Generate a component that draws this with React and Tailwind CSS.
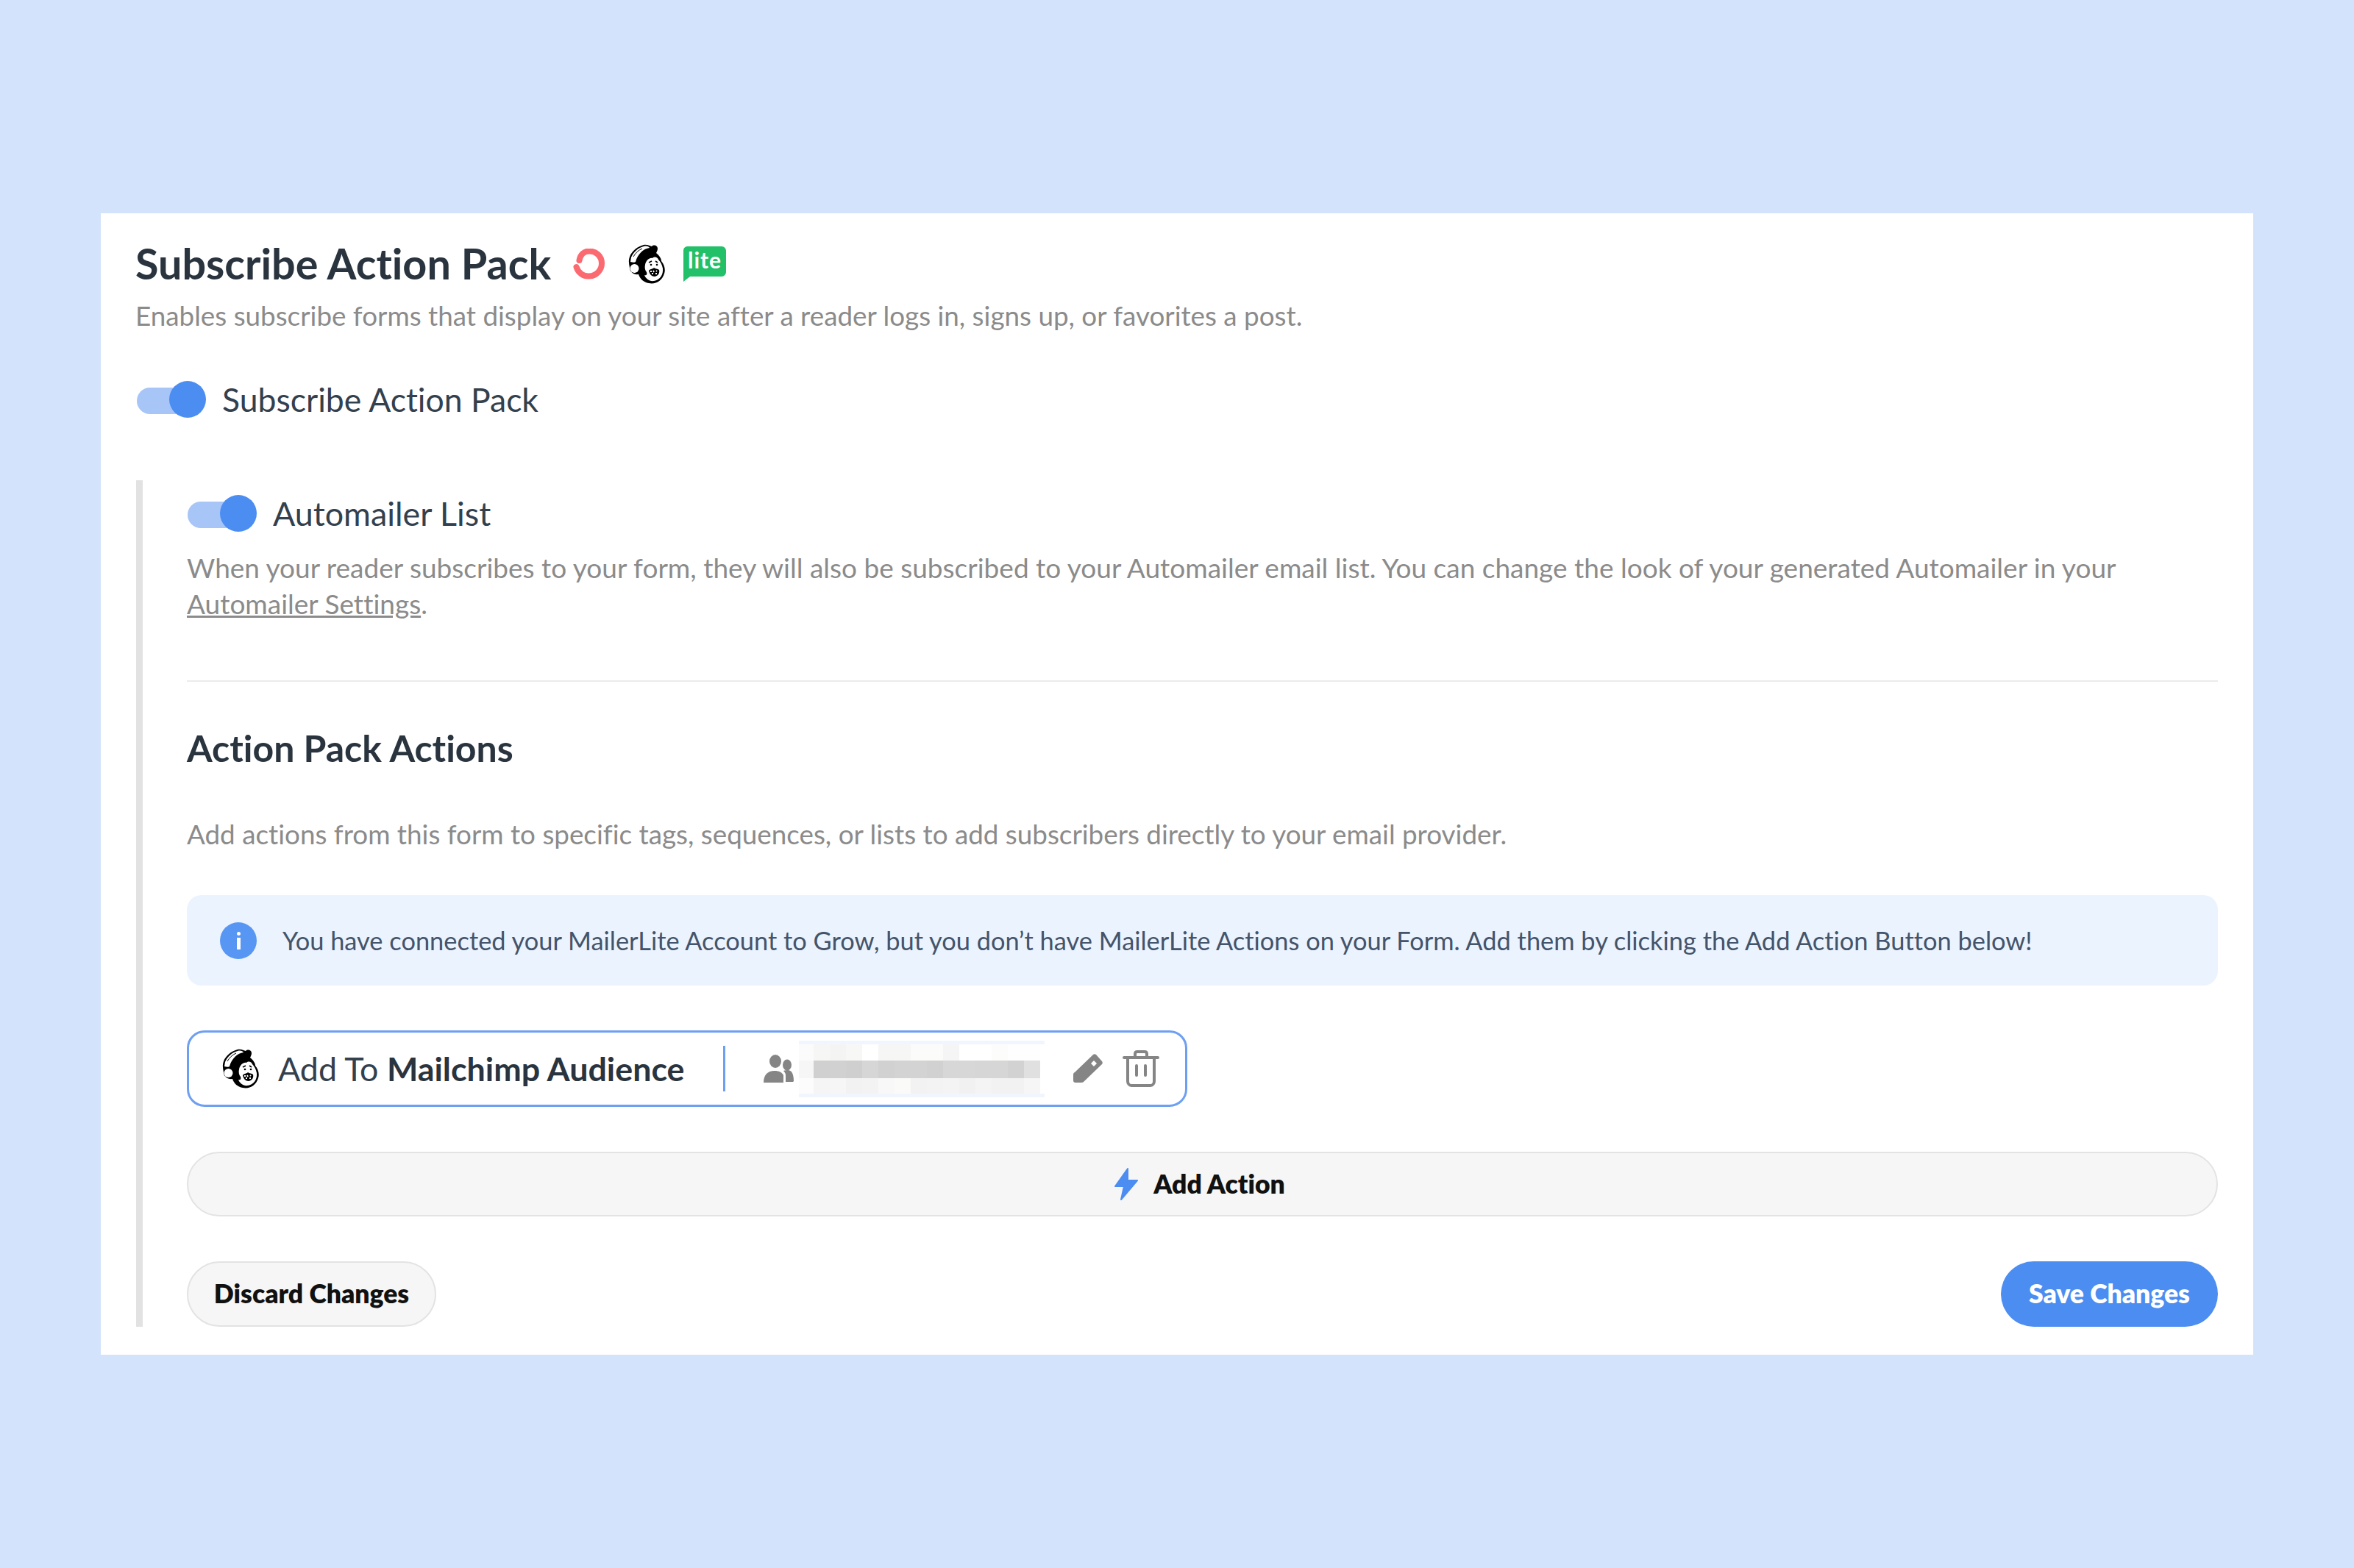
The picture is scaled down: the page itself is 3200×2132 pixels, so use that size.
import React from "react";

function Mailchimp({ className }) {
  return (
    <svg viewBox="0 0 52 54" className={className}>
      <path d="M22 1C27 0 31 3 33 3 36 0 41 2 41 6 41 8 40 10 39 12 44 16 46 20 46 23 50 28 52 34 50 40 47 50 38 55 29 53 22 52 17 47 15 41 9 42 3 38 3 32 2 27 1 22 3 17 6 9 14 3 22 1z" fill="#000" />
      <path d="M5 18C8 11 14 5 22 3 26 2 29 3 30 5 22 6 14 13 11 24 10 25 7 25 4 24z" fill="#fff" />
      <path d="M8 17C11 12 15 8 20 6" stroke="#000" strokeWidth="1" fill="none" />
      <circle cx="9.500" cy="33" r="6" fill="#fff" />
      <path d="M24 28C25 22 30 18 34 19 37 16 41 18 42 21 45 24 47 28 48 33 49 41 44 49 36 50 30 51 25 47 23 42 26 43 27 41 26 38 24 36 23 32 24 28z" fill="#fff" />
      <path d="M29 25l4-2M38 23l3 2" stroke="#000" strokeWidth="1.600" fill="none" />
      <circle cx="32" cy="28" r="1.300" fill="#000" />
      <circle cx="40" cy="28" r="1.300" fill="#000" />
      <path d="M29 36C31 33 35 34 36 32 38 34 41 33 43 35 44 39 42 43 37 44 33 44 30 41 29 36z" fill="#000" />
      <path d="M31 37h2M35 36l1 2M39 36l1 1M33 40h2M38 40h2" stroke="#fff" strokeWidth="1.800" />
    </svg>
  );
}

function Toggle({ className }) {
  return (
    <span className={`relative block h-[50px] w-[94px] shrink-0 ${className}`}>
      <span className="absolute left-0 right-[10px] top-[9px] h-[36px] rounded-full bg-[#a7c5f7]" />
      <span className="absolute right-0 top-0 h-[50px] w-[50px] rounded-full bg-[#4c8df1]" />
    </span>
  );
}

const topRow = ["#fbfbfb","#f6f6f5","#f4f4f3","#f7f7f6","#ffffff","#f6f6f5","#f6f6f5","#fbfbfa","#fbfbfa","#f5f5f5","#ffffff","#ffffff","#fcfcfb","#fefefe","#fefefe"];
const midRow = ["#f6f6f6","#d0d0d0","#d1d1d1","#cfcfcf","#d6d6d6","#d1d1d1","#d3d3d3","#d3d3d3","#d1d1d1","#d7d7d7","#d7d7d7","#d6d6d6","#d6d6d6","#d2d2d2","#e0e0e0"];
const botRow = ["#fcfcfc","#f5f5f5","#f6f6f6","#f2f2f2","#f3f3f3","#f8f8f8","#fafaf8","#f2f2f2","#f3f3f3","#f4f4f4","#f1f1f1","#f4f4f4","#f2f2f2","#f2f2f2","#f6f6f6"];

function Redacted() {
  return (
    <div className="ml-[7px] flex h-[77px] w-[334px] flex-col border-y-[5px] border-[#f1f6fe]">
      {[[topRow, "h-[22px]"], [midRow, "h-[24px]"], [botRow, "h-[21px]"]].map(([row, h], i) => (
        <div key={i} className={`flex ${h}`}>
          {row.map((c, j) => (
            <div key={j} className={j === 0 ? "w-[20px]" : "w-[22px]"} style={{ backgroundColor: c }} />
          ))}
        </div>
      ))}
    </div>
  );
}

export default function App() {
  return (
    <div className="h-[2132px] w-[3200px] bg-[#d3e3fc] px-[137px] pt-[290px] font-['Lato','Noto_Sans',sans-serif] [font-variant-ligatures:none]">
      <div className="h-[1552px] w-[2926px] bg-white pl-[47px] pr-[48px] pt-[34px]">
        <div className="flex h-[68px] items-center">
          <h1 className="text-[57.500px] font-bold leading-[68px] text-[#29343f]">Subscribe Action Pack</h1>
          <svg viewBox="0 0 44 42" className="ml-[29px] mt-[2px] h-[42px] w-[44px]">
            <path d="M5.500 25C8 33 15 38 23 37.500 33 37 40 29 40 20 40 10 32 3.500 23 3.500 16 3.500 11 8 9.500 16" fill="none" stroke="#fb6a70" strokeWidth="8" strokeLinecap="round" />
          </svg>
          <Mailchimp className="ml-[31px] mt-[2px] h-[54px] w-[52px]" />
          <svg viewBox="0 0 59 48" className="ml-[23px] mt-[2px] h-[48px] w-[59px]">
            <path d="M6 0h47a6 6 0 0 1 6 6v29a6 6 0 0 1-6 6H10L1 48V6a6 6 0 0 1 5-6z" fill="#22c069" />
            <text x="30" y="30" textAnchor="middle" fontFamily="Lato" fontWeight="700" fontSize="30" letterSpacing="1" fill="#fff">lite</text>
          </svg>
        </div>
        <p className="mt-[13px] text-[36.800px] leading-[48px] text-[#8b8b8b]">Enables subscribe forms that display on your site after a reader logs in, signs up, or favorites a post.</p>
        <div className="mt-[65px] flex items-center gap-[22px]">
          <Toggle className="ml-[2px]" />
          <span className="text-[44.500px] leading-[50px] text-[#33404d]">Subscribe Action Pack</span>
        </div>
        <div className="ml-[1px] mt-[85px] flex h-[1151px] flex-col border-l-[9px] border-[#e2e2e2] pl-[60px] pt-[20px]">
          <div className="flex items-center gap-[22px]">
            <Toggle className="ml-[1px]" />
            <span className="text-[44.800px] leading-[50px] text-[#33404d]">Automailer List</span>
          </div>
          <p className="mt-[24px] text-[37px] leading-[49px] text-[#8b8b8b]">
            When your reader subscribes to your form, they will also be subscribed to your Automailer email list. You can change the look of your generated Automailer in your{" "}
            <span className="underline">Automailer Settings</span>.
          </p>
          <div className="mt-[80px] h-[2px] bg-[#ebebeb]" />
          <h2 className="mt-[58px] text-[50px] font-bold leading-[64px] text-[#29343f]">Action Pack Actions</h2>
          <p className="mt-[61px] text-[36.800px] leading-[48px] text-[#8b8b8b]">Add actions from this form to specific tags, sequences, or lists to add subscribers directly to your email provider.</p>
          <div className="mt-[59px] flex h-[123px] items-center gap-[35px] rounded-[20px] bg-[#ebf3fe] pl-[45px]">
            <span className="flex h-[50px] w-[50px] flex-col items-center justify-center gap-[3px] rounded-full bg-[#5896f3]">
              <span className="h-[5px] w-[5px] rounded-full bg-white" />
              <span className="h-[16px] w-[5px] bg-white" />
            </span>
            <span className="text-[34.400px] leading-[46px] text-[#44546a]">You have connected your MailerLite Account to Grow, but you don’t have MailerLite Actions on your Form. Add them by clicking the Add Action Button below!</span>
          </div>
          <div className="mt-[61px] flex h-[104px] w-[1360px] items-center rounded-[24px] border-[3px] border-[#6ea0f2] pl-[44px]">
            <Mailchimp className="h-[54px] w-[52px]" />
            <span className="ml-[25px] text-[44.800px] leading-[56px] text-[#33404d]">
              Add To <span className="font-bold text-[#29343f]">Mailchimp Audience</span>
            </span>
            <span className="ml-[52px] h-[62px] w-[3px] bg-[#6ea0f2]" />
            <svg viewBox="0 0 41 38" className="ml-[52px] h-[38px] w-[41px]" fill="#858585">
              <ellipse cx="16" cy="9" rx="8" ry="9" />
              <ellipse cx="32" cy="14" rx="6" ry="7.500" />
              <path d="M0 38c0-10 5-16 15-16 6 0 10 2 12 6v10z" />
              <path d="M27 22c2-1 4-1 6-1 5 0 8 5 8 15l-1 1H30v-9c0-2-1-4-3-6z" />
            </svg>
            <Redacted />
            <svg viewBox="0 0 41 40" className="ml-[39px] h-[40px] w-[41px]" fill="#858585">
              <path fillRule="evenodd" d="M27 1c1-1 3-1 4 0l8 9c1 1 1 3 0 4L15 37c-1 1-2 2-4 2H3c-2 0-3-1-3-3v-7c0-2 0-3 2-4zM28 9l-4 4 4 4 4-4z" />
            </svg>
            <svg viewBox="0 0 50 50" className="ml-[26px] h-[50px] w-[50px]" fill="none" stroke="#858585" strokeWidth="4" strokeLinecap="round">
              <path d="M2 10h46M17 9V5c0-2 1-3 3-3h10c2 0 3 1 3 3v4M7 11v31c0 3 2 6 5 6h26c3 0 5-3 5-6V11M19 21v13M31 21v13" />
            </svg>
          </div>
          <div className="mt-[61px] flex h-[88px] items-center justify-center gap-[20px] rounded-full border-[2px] border-[#e3e3e3] bg-[#f6f6f6] pr-[8px]">
            <svg viewBox="0 0 34 46" className="h-[46px] w-[34px]" fill="#4c8df1" stroke="#4c8df1" strokeWidth="2" strokeLinejoin="round">
              <path d="M19 2L2 26h12l-4 18 22-26H19z" />
            </svg>
            <span className="text-[35.500px] font-extrabold leading-[48px] text-[#111]">Add Action</span>
          </div>
          <div className="mt-[61px] flex items-center justify-between">
            <button className="h-[89px] w-[339px] rounded-full border-[2px] border-[#e3e3e3] bg-[#f6f6f6] pb-[2px] text-[35.500px] font-extrabold text-[#111]">Discard Changes</button>
            <button className="h-[89px] w-[295px] rounded-full bg-[#4c8df1] pb-[2px] text-[35.500px] font-extrabold text-white">Save Changes</button>
          </div>
        </div>
      </div>
    </div>
  );
}
